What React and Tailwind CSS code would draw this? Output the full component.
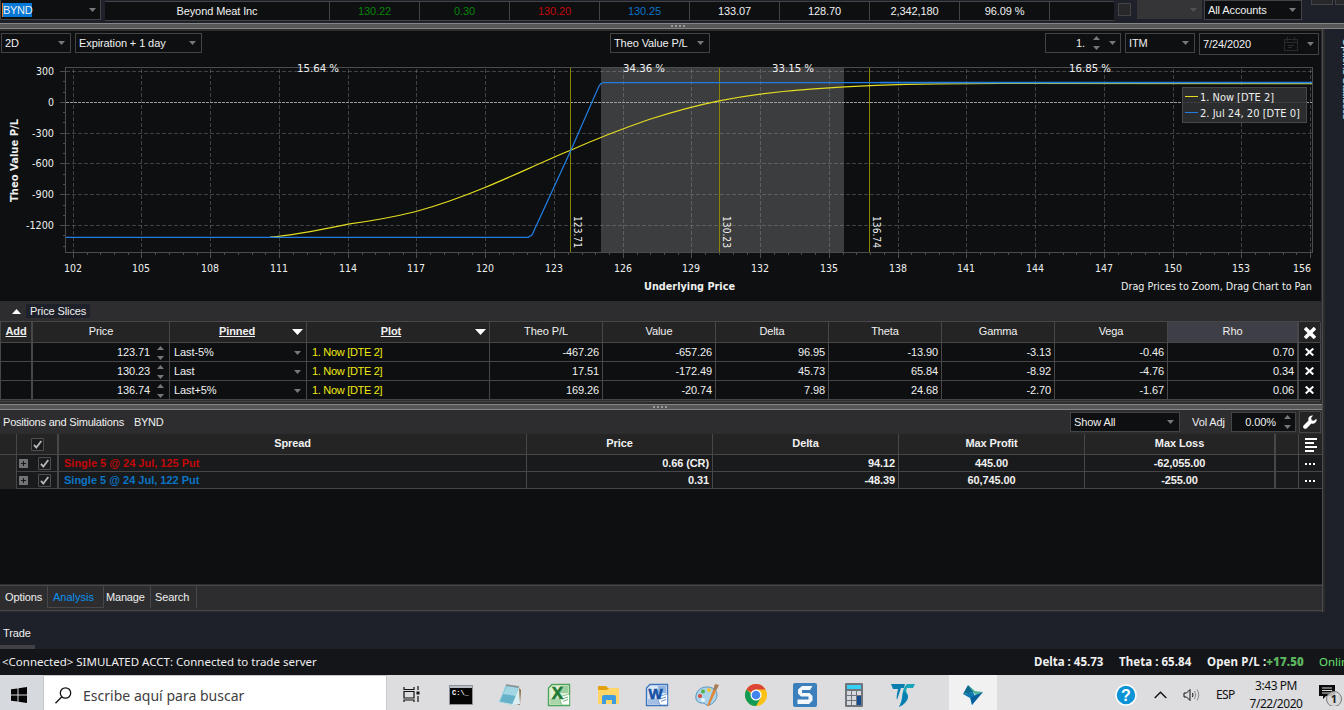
import React from "react";

const ARIAL = "font-['Liberation_Sans',sans-serif]";
const UI = "font-['Noto_Sans',sans-serif]";

function Down({ className = "text-[#77787a]", w = 7, h = 4 }) {
  return (
    <svg className={"shrink-0 " + className} width={w} height={h} viewBox="0 0 8 4" preserveAspectRatio="none">
      <path d="M0 0H8L4 4Z" fill="currentColor" />
    </svg>
  );
}

function Up({ className = "text-[#77787a]", w = 7, h = 4 }) {
  return (
    <svg className={"shrink-0 " + className} width={w} height={h} viewBox="0 0 8 4" preserveAspectRatio="none">
      <path d="M0 4H8L4 0Z" fill="currentColor" />
    </svg>
  );
}

function Combo({ className, children }) {
  return (
    <div className={"flex shrink-0 items-center justify-between border border-[#434446] bg-[#0d0f11] pl-[3px] pr-[5px] " + className}>
      <span>{children}</span>
      <Down />
    </div>
  );
}

function Splitter({ className, dots }) {
  return (
    <div className={"flex shrink-0 justify-start border-y border-[#858585] bg-[#575757] " + className}>
      <div className={"flex h-[2px] gap-[2px] " + dots}>
        <i className="w-[2px] bg-[#9a9a9a]" />
        <i className="w-[2px] bg-[#9a9a9a]" />
        <i className="w-[2px] bg-[#9a9a9a]" />
        <i className="w-[2px] bg-[#9a9a9a]" />
      </div>
    </div>
  );
}

const quotes = [
  ["130.22", "text-[#078307]"],
  ["0.30", "text-[#078307]"],
  ["130.20", "text-[#c00808]"],
  ["130.25", "text-[#0a74c4]"],
  ["133.07", ""],
  ["128.70", ""],
  ["2,342,180", ""],
  ["96.09 %", ""],
];

function QuoteBar() {
  return (
    <header className="flex h-[23px] shrink-0 items-start bg-[#1e202a]">
      <div className="flex h-5 w-[101px] items-center justify-between border border-t-0 border-[#434446] bg-[#0d0f11] pl-[1px] pr-1">
        <span className="h-[14px] w-[30px] border-l border-[#f08030] bg-[#0478d7] leading-[14px] tracking-[-0.3px]">BYND</span>
        <Down />
      </div>
      <div className="ml-1 mt-px flex h-5 w-[1009px] border-y border-[#434446] bg-[#0d0f11] text-center leading-[19px]">
        <div className="w-[225px] border-r border-[#434446]">Beyond Meat Inc</div>
        {quotes.map(([t, c], i) => (
          <div key={i} className={"w-[90px] border-r border-[#434446] " + c}>{t}</div>
        ))}
      </div>
      <div className="ml-1 mt-[3px] size-[13px] border border-[#434446] bg-[#28282a]" />
      <div className="ml-[6px] flex h-[19px] w-[65px] items-center justify-end bg-[#353538] pr-[5px]">
        <Down className="text-[#505154]" />
      </div>
      <Combo className="ml-[2px] h-5 w-[98px]">All Accounts</Combo>
      <div className="ml-[9px] h-[5px] w-[22px] border border-t-0 border-[#434446] bg-[#28282a]" />
      <div className="ml-[2px] h-[5px] w-[9px] border border-r-0 border-t-0 border-[#434446] bg-[#28282a]" />
    </header>
  );
}

function Toolbar() {
  return (
    <div className="flex h-6 shrink-0 items-start pl-[1px] pt-[2px]">
      <Combo className="h-5 w-[70px]">2D</Combo>
      <Combo className="ml-1 h-5 w-[127px]">Expiration + 1 day</Combo>
      <Combo className="ml-[408px] h-5 w-[100px]">Theo Value P/L</Combo>
      <div className="ml-[335px] flex h-5 w-[76px] items-center justify-end border border-[#434446] pr-1">
        <span className="mr-2">1.</span>
        <span className="mr-[9px] flex flex-col gap-[6px]"><Up /><Down /></span>
        <Down />
      </div>
      <Combo className="ml-1 h-5 w-[70px]">ITM</Combo>
      <div className="ml-1 flex h-[22px] w-[120px] items-center border border-[#434446] pl-[3px] pr-1">
        <span className="flex-1">7/24/2020</span>
        <svg className="mr-[9px]" width="14" height="14" viewBox="0 0 14 14" fill="none" stroke="#2a2b2d">
          <path d="M.5 2.5h13v11H.5zM.5 5.5h13M3.5 0v4M10.5 0v4M4 8.5h6M4 10.5h4" />
        </svg>
        <Down />
      </div>
    </div>
  );
}

const xTicks = [73, 141, 210, 279, 348, 416, 485, 554, 623, 691, 760, 829, 898, 966, 1035, 1104, 1173, 1241, 1310];
const yTicks = [[71, "300"], [102, "0"], [133, "-300"], [163, "-600"], [194, "-900"], [225, "-1200"]];
const slices = [[570, "123.71", 574], [719, "130.23", 723], [869, "136.74", 873]];
const shares = [[297, "15.64 %"], [623, "34.36 %"], [772, "33.15 %"], [1069, "16.85 %"]];

function Chart() {
  const minorX = Array.from({ length: 91 }, (_, i) => Math.round(73 + i * 13.745)).filter((_, i) => i % 5 !== 0);
  const minorY = Array.from({ length: 18 }, (_, i) => Math.round(71 + i * 10.28)).filter((_, i) => i % 3 !== 0);
  return (
    <svg className="shrink-0 tracking-normal" width="1321" height="246" viewBox="0 55 1321 246" fontFamily="'DejaVu Sans Condensed','DejaVu Sans',sans-serif" fontStretch="condensed" fontSize="11" fill="#efefef">
      <rect x="601" y="68" width="243" height="184" fill="#3c3d3f" />
      <g stroke="#a0a0a0" strokeOpacity=".35" strokeDasharray="4 2" shapeRendering="crispEdges">
        {xTicks.map((x) => <path key={x} d={`M${x}.5 69V252`} />)}
        {yTicks.map(([y]) => y !== 102 && <path key={y} d={`M66 ${y}.5H1312`} />)}
      </g>
      <path d="M66 102.5H1312" stroke="#9c9c9c" strokeDasharray="3 1" shapeRendering="crispEdges" />
      <g stroke="#4b4c4e" fill="none" shapeRendering="crispEdges">
        <path d="M65.5 67.5H1312.5V252.5H65.5Z" />
        {xTicks.map((x) => <path key={x} d={`M${x}.5 253V258`} />)}
        {minorX.map((x) => <path key={x} d={`M${x}.5 253V255`} />)}
        {yTicks.map(([y]) => <path key={y} d={`M60 ${y}.5H65`} />)}
        {minorY.map((y) => <path key={y} d={`M63 ${y}.5H65`} />)}
      </g>
      <g stroke="#8a8400" shapeRendering="crispEdges">
        {slices.map(([x]) => <path key={x} d={`M${x}.5 68V252`} />)}
      </g>
      <path d="M270 237.2C296 235 322 229.500 348 224.200C371 221 394 217 416 211.500C440 205 463 196.500 485 187.500C514 175.500 542 162 570 150.500C597 138.500 623 128.500 649 119.500C672 112 696 105.500 719 100.800C744 96 780 91 814 88.800C855 86 896 84.400 938 83.900L1000 83.500H1312" stroke="#e3dc20" fill="none" strokeWidth="1.25" />
      <path d="M66 237.4H528L532 235L571 150L599 86L601 83.5L604 82.5H1312" stroke="#217de2" fill="none" strokeWidth="1.25" />
      <path d="M880 82.5H1312" stroke="#217de2" strokeWidth="1.4" />
      {shares.map(([x, t]) => <text key={x} x={x} y="72" textLength="42" lengthAdjust="spacingAndGlyphs">{t}</text>)}
      {yTicks.map(([y, t]) => <text key={y} x="54" y={y + 4} textAnchor="end" textLength={t.replace("-", "").length * 6 + (t[0] === "-" ? 4 : 0)} lengthAdjust="spacingAndGlyphs">{t}</text>)}
      {xTicks.map((x, i) => <text key={x} x={i === 18 ? 1302 : x} y="272" textAnchor="middle" textLength="18" lengthAdjust="spacingAndGlyphs">{102 + i * 3}</text>)}
      {slices.map(([x, t, tx]) => <text key={x} transform={`translate(${tx} 216) rotate(90)`} textLength="32" lengthAdjust="spacingAndGlyphs">{t}</text>)}
      <text x="644" y="290" fontWeight="bold" textLength="91" lengthAdjust="spacingAndGlyphs">Underlying Price</text>
      <text transform="translate(18 202) rotate(-90)" fontWeight="bold" textLength="83" lengthAdjust="spacingAndGlyphs">Theo Value P/L</text>
      <text x="1121" y="290" textLength="191" lengthAdjust="spacingAndGlyphs">Drag Prices to Zoom, Drag Chart to Pan</text>
      <rect x="1182.5" y="87.5" width="124" height="35" fill="#303133" fillOpacity=".85" stroke="#47484a" />
      <path d="M1185 96.5H1198" stroke="#e3dc20" />
      <path d="M1185 112.5H1198" stroke="#217de2" />
      <text x="1200" y="101" textLength="74" lengthAdjust="spacingAndGlyphs">1. Now [DTE 2]</text>
      <text x="1200" y="117" textLength="100" lengthAdjust="spacingAndGlyphs">2. Jul 24, 20 [DTE 0]</text>
    </svg>
  );
}

const sliceGrid = "grid grid-cols-[33px_137px_137px_183px_113px_113px_113px_113px_113px_113px_131px_22px]";
const sliceRows = [
  ["123.71", "Last-5%", ["-467.26", "-657.26", "96.95", "-13.90", "-3.13", "-0.46", "0.70"]],
  ["130.23", "Last", ["17.51", "-172.49", "45.73", "65.84", "-8.92", "-4.76", "0.34"]],
  ["136.74", "Last+5%", ["169.26", "-20.74", "7.98", "24.68", "-2.70", "-1.67", "0.06"]],
];
const greeks = ["Theo P/L", "Value", "Delta", "Theta", "Gamma", "Vega", "Rho"];

function PriceSlices() {
  return (
    <section className="flex h-[103px] shrink-0 flex-col bg-[#2d2d2f]">
      <div className="flex h-5 items-center pl-3">
        <Up className="text-white" w={9} h={5} />
        <span className="ml-[5px] h-[14px] bg-[#1e202a] px-1 leading-[14px]">Price Slices</span>
      </div>
      <div className="w-[1320px] border-b border-t border-[#47474a] pb-px">
        <div className={sliceGrid + " h-[21px] border-b border-[#47474a] bg-[#242425] text-center leading-[19px]"}>
          <div className="border-l border-r-2 border-[#47474a] font-bold underline">Add</div>
          <div className="border-r border-[#47474a]">Price</div>
          <div className="flex items-center border-r border-[#47474a] pl-3 pr-[3px] font-bold underline">
            <span className="flex-1 self-start">Pinned</span><Down className="text-white" w={11} h={6} />
          </div>
          <div className="flex items-center border-r border-[#47474a] pr-[3px] font-bold underline">
            <span className="flex-1 self-start">Plot</span><Down className="text-white" w={11} h={6} />
          </div>
          {greeks.map((g) => (
            <div key={g} className={g === "Rho" ? "border-r-2 border-[#47474a] bg-[#3e3e46]" : "border-r border-[#47474a]"}>{g}</div>
          ))}
          <div className="flex items-center justify-center border-r border-[#47474a] pt-[2px]">
            <svg width="12" height="12" viewBox="0 0 12 12" stroke="#fff" strokeWidth="3.6"><path d="M1 1L11 11M11 1L1 11" /></svg>
          </div>
        </div>
        {sliceRows.map(([price, pin, vals]) => (
          <div key={price} className={sliceGrid + " h-[19px] border-b border-[#47474a] bg-[#0d0f11] text-right leading-[19px]"}>
            <div className="border-l border-r-2 border-[#47474a]" />
            <div className="flex items-center justify-end border-r border-[#47474a] pr-[5px]">
              <span className="mr-[7px]">{price}</span>
              <span className="flex flex-col gap-[6px]"><Up /><Down /></span>
            </div>
            <div className="flex items-center justify-between border-r border-[#47474a] pl-1 pr-[5px]">
              <span>{pin}</span><Down />
            </div>
            <div className="border-r border-[#47474a] pl-[5px] text-left tracking-[-0.3px] text-[#f0e911]">1. Now [DTE 2]</div>
            {vals.map((v, i) => (
              <div key={i} className={i === 6 ? "border-r-2 border-[#47474a] pr-[3px]" : "border-r border-[#47474a] pr-[3px]"}>{v}</div>
            ))}
            <div className="flex items-center justify-center border-r border-[#47474a] pb-px">
              <svg width="9" height="8" viewBox="0 0 9 8" stroke="#fff" strokeWidth="2"><path d="M.7 .5L8.3 7.5M8.3 .5L.7 7.5" /></svg>
            </div>
          </div>
        ))}
      </div>
    </section>
  );
}

function Check() {
  return (
    <svg width="13" height="13" viewBox="0 0 13 13" fill="#1a1b1d" stroke="#4f4f52">
      <path d="M.5 .5h12v12H.5z" />
      <path d="M3 6.8L5.3 9.5L10.3 3" fill="none" stroke="#b9b9b9" strokeWidth="1.8" />
    </svg>
  );
}

const posGrid = "grid grid-cols-[17px_42px_468px_186px_186px_186px_191px_23px_24px]";
const positions = [
  ["Single 5 @ 24 Jul, 125 Put", "text-[#c00808]", "0.66 (CR)", "94.12", "445.00", "-62,055.00"],
  ["Single 5 @ 24 Jul, 122 Put", "text-[#0a74c4]", "0.31", "-48.39", "60,745.00", "-255.00"],
];

function Positions() {
  return (
    <section className="flex h-[174px] shrink-0 flex-col">
      <div className="flex h-6 shrink-0 items-start bg-[#2d2d2f] pl-[3px] pt-[2px] leading-5">
        <span className="w-[131px] whitespace-nowrap tracking-[-0.2px]">Positions and Simulations</span>
        <span className="tracking-[-0.3px]">BYND</span>
        <Combo className="ml-auto h-5 w-[110px]">Show All</Combo>
        <span className="ml-3 w-[38px] whitespace-nowrap">Vol Adj</span>
        <div className="ml-[1px] flex h-5 w-[65px] items-center justify-end border border-[#434446] bg-[#0d0f11] pr-1">
          <span className="mr-[8px]">0.00%</span>
          <span className="flex flex-col gap-[6px]"><Up /><Down /></span>
        </div>
        <div className="-mt-px ml-[3px] mr-px flex h-[22px] w-[22px] items-center justify-center border border-[#434446] bg-[#242425]">
          <svg width="14" height="14" viewBox="0 0 24 24" fill="#fff"><path d="M23 6.500L18.600 9.800L14.800 8.800L13.900 5.200L17.200.9C13.800.1 10.400 2 9.400 5.200C9 6.700 9 8 9.500 9.400L1.300 17.400C-.2 19-.2 21.200 1.200 22.700C2.700 24.200 5 24.100 6.500 22.600L14.400 14.500C19.600 16.200 24.700 12 23 6.500Z" /></svg>
        </div>
      </div>
      <div className={posGrid + " h-[21px] shrink-0 border-b border-[#47474a] bg-[#242425] text-center font-bold leading-[19px]"}>
        <div className="border-r border-[#47474a]" />
        <div className="flex items-center justify-center border-r-2 border-[#47474a]"><Check /></div>
        {["Spread", "Price", "Delta", "Max Profit"].map((h) => <div key={h} className="border-r border-[#47474a]">{h}</div>)}
        <div className="border-r-2 border-[#47474a]">Max Loss</div>
        <div className="border-r border-[#47474a]" />
        <div className="flex items-center justify-center pt-px">
          <svg width="12" height="14" viewBox="0 0 12 14" stroke="#fff" strokeWidth="2"><path d="M0 1H12M0 5H9M0 9H12M0 13H9" /></svg>
        </div>
      </div>
      {positions.map(([name, color, price, delta, profit, loss]) => (
        <div key={name} className={posGrid + " h-[17px] shrink-0 border-b border-[#47474a] bg-[#191a1c] font-bold leading-[17px]"}>
          <div className="border-r border-[#47474a] bg-[#242425]" />
          <div className="flex items-center border-r-2 border-[#47474a] pl-[2px]">
            <svg className="-mt-px mr-[10px]" width="9" height="9" viewBox="0 0 9 9"><path d="M0 0h9v9H0z" fill="#737375" /><path d="M2 4.500h5M4.500 2v5" stroke="#151618" /></svg>
            <span className="-mt-px"><Check /></span>
          </div>
          <div className={"border-r border-[#47474a] pl-[5px] tracking-normal " + color}>{name}</div>
          <div className="border-r border-[#47474a] pr-[3px] text-right">{price}</div>
          <div className="border-r border-[#47474a] pr-[3px] text-right">{delta}</div>
          <div className="border-r border-[#47474a] text-center">{profit}</div>
          <div className="border-r-2 border-[#47474a] text-center">{loss}</div>
          <div className="border-r border-[#47474a]" />
          <div className="flex items-center justify-center gap-[2px] pr-[2px]">
            <i className="size-[2px] bg-white" /><i className="size-[2px] bg-white" /><i className="size-[2px] bg-white" />
          </div>
        </div>
      ))}
      <div className="flex-1 bg-[#0d0f11]" />
    </section>
  );
}

function Tabs() {
  return (
    <nav className="flex h-[28px] shrink-0 flex-col bg-[#2d2d2f] pt-px">
      <div className="flex h-[26px] items-start border-y border-[#47474a] leading-[22px]">
        <div className="h-[22px] w-[48px] border-r border-[#47474a] pl-[5px]">Options</div>
        <div className="h-[22px] w-[56px] border-b border-r border-[#47474a] pl-[5px] tracking-normal text-[#0a92ee]">Analysis</div>
        <div className="h-[22px] w-[47px] border-r border-[#47474a] pl-[2px] tracking-[-0.2px]">Manage</div>
        <div className="h-[22px] w-[46px] border-r border-[#47474a] pl-1">Search</div>
      </div>
    </nav>
  );
}

const sized = (children, w = 24, h = 24) => (
  <svg width={w} height={h} viewBox={`0 0 ${w} ${h}`}>{children}</svg>
);

function OfficeIcon({ dark, mid, light, letter }) {
  return sized(
    <>
      <path d="M5 1.500H22.500V22.500H1.500V5Z" fill={light} stroke={mid} strokeWidth="1.4" />
      <path d="M13 3H21V10H13Z" fill={mid} fillOpacity=".45" />
      <path d="M3 16L14 15V21H3Z" fill={mid} fillOpacity=".35" />
      <path d="M12 14L22.500 11V22H15Z" fill="#fff" stroke={mid} strokeWidth=".6" />
      <path d="M15 16L21 14M16 18.500L21 16.500" stroke={mid} strokeWidth=".8" />
      <text x="10.500" y="16" textAnchor="middle" fontFamily="Liberation Sans" fontWeight="bold" fontSize={letter === "W" ? 15 : 17} fill={dark} stroke={dark} strokeWidth=".6">{letter}</text>
    </>
  );
}

const apps = [
  sized(<><path d="M.5 1.500h23v19H.5z" fill="#050505" stroke="#8c9298" /><path d="M1 2h22v2H1z" fill="#b9bec4" /><text x="3" y="11" fontFamily="Liberation Mono" fontWeight="bold" fontSize="7" fill="#fff">C:\_</text></>, 24, 22),
  sized(<><path d="M19 3L23 7L22 22L17 21Z" fill="#8a6b43" /><path d="M8 2L21 4L17 22L1 19Z" fill="#66b3c9" stroke="#b9dce4" /><path d="M9 3L20 5L18 13L5 11Z" fill="#a2d6e2" /><path d="M21 5L22 21L14 22Z" fill="#dbeef2" /><path d="M8 2L21 4" stroke="#8c8c8c" strokeWidth="1.6" /></>),
  <OfficeIcon dark="#1f7a35" mid="#4fa45a" light="#dff0d8" letter="X" />,
  sized(<><path d="M1 3H9L11 5H22V20H1Z" fill="#e3a010" /><path d="M1 7H10L12 5H22V21H1Z" fill="#ffd667" /><path d="M5 14Q5 12 7 12H17Q19 12 19 14V21H15V17H9V21H5Z" fill="#3f9be0" /></>, 23, 24),
  <OfficeIcon dark="#1650a4" mid="#3f74bd" light="#dbe8f8" letter="W" />,
  sized(<><path d="M12 4C3 4 0 11 1 16C3 22 10 19 10 21C13 25 22 19 22 12C22 7 18 4 12 4Z" fill="#a9d4ea" stroke="#5b98bf" /><circle cx="5" cy="13" r="2" fill="#e0483a" /><circle cx="8" cy="8.500" r="2" fill="#55b04b" /><circle cx="14" cy="7" r="2" fill="#f4c531" /><circle cx="8" cy="17" r="2" fill="#e8f4fa" /><path d="M12 23L18 7L21 8L14 23Z" fill="#e0873a" /><path d="M18 7L20 1L24 2L21 8Z" fill="#a87d55" /></>),
  sized(<><circle cx="12" cy="12" r="11" fill="#fbc116" /><path d="M12 12L2.470 6.500A11 11 0 0 1 21.530 6.500H12Z" fill="#dc4437" /><path d="M2.470 6.500A11 11 0 0 0 12 23L16.760 14.750H12Z" fill="#149a57" /><circle cx="12" cy="12" r="5.500" fill="#fff" /><circle cx="12" cy="12" r="4.300" fill="#4384ee" /></>),
  sized(<><rect width="24" height="24" rx="2" fill="#3b80bd" /><path d="M19.500 3H9L5 6.500V10.500L8 13.500H15.500V16.500H4.500V21H16L19.500 17.500V13L16.500 10H9V7H17Z" fill="#f4f8fb" /></>),
  sized(<><rect width="18" height="24" rx="1" fill="#70757c" /><path d="M2 2h14v4H2z" fill="#35d0f4" /><path d="M2 8h4v4H2zM7 8h4v4H7zM12 8h4v4h-4zM2 13h4v4H2zM7 13h4v4H7zM2 18h4v4H2zM7 18h4v4H7z" fill="#d6d9dd" /><path d="M12 13h4v9h-4z" fill="#134a91" /></>, 18, 24),
  sized(<><path d="M0 1H14L13 5H10L6 17Q5 14 7 6H2Z" fill="#087fae" /><path d="M16 1H24L22 5H16Q14 8 17 12Q18 18 8 24Q11 18 11 14Q12 4 16 1Z" fill="#1ba5ba" /><path d="M12 10Q11 19 8 24Q17 20 17 13L13 8Z" fill="#087fb3" /></>),
];

function Taskbar() {
  return (
    <footer className={"flex h-[35px] shrink-0 bg-[#dddddf] tracking-normal text-[#111] " + UI}>
      <div className="flex w-[43px] items-center justify-start bg-[#d6d9de] pl-[11px] pt-1">
        <svg width="16" height="16" viewBox="0 0 16 16"><path d="M0 2.300L6.500 1.400V7.500H0zM7.500 1.200L16 0V7.500H7.500zM0 8.500H6.500V14.600L0 13.700zM7.500 8.500H16V16L7.500 14.800z" fill="#050505" /></svg>
      </div>
      <div className="flex w-[344px] items-center border-x border-t border-[#c8c8c8] bg-white pl-[11px] pt-[5px]">
        <svg width="17" height="17" viewBox="0 0 17 17" fill="none" stroke="#111" strokeWidth="1.3"><circle cx="10.500" cy="6" r="5.200" /><path d="M6.800 9.800L.5 16.200" /></svg>
        <span className="ml-[11px] whitespace-nowrap text-[14px] leading-5 tracking-[0.02px] text-[#404040]">Escribe aquí para buscar</span>
      </div>
      <div className="flex w-[49px] items-center justify-center pt-1">
        <svg width="17" height="17" viewBox="0 0 17 17" fill="none" stroke="#111" strokeWidth="1.2"><path d="M1 1V3.500H11V1M1 5.500H11V12H1ZM1 16V14H11V16M15 0V4M15 10V16" /><path d="M13.500 5.500h3v3h-3z" fill="#111" stroke="none" /></svg>
      </div>
      {apps.map((icon, i) => <div key={i} className="flex w-[49.2px] items-center justify-center pt-1">{icon}</div>)}
      <div className="ml-[21px] flex w-12 items-center justify-center bg-[#f1f1f2] pt-1">
        <svg width="20" height="20" viewBox="0 0 20 20"><path d="M5 0L12 7L0 9Z" fill="#0c6b8e" /><path d="M5 0L12 6L20 7L14 12Z" fill="#55b59c" /><path d="M0 9L10 7L13 13L9 20L7 13Z" fill="#0c78b0" /><path d="M20 7L9 20L8 12Z" fill="#075f9e" /></svg>
      </div>
      <div className="ml-auto flex w-[229px] items-center pt-[5px]">
        <svg width="22" height="22" viewBox="0 0 22 22"><circle cx="11" cy="11" r="10" fill="#0b93d5" stroke="#fff" strokeWidth="1.500" /><text x="11" y="16.500" textAnchor="middle" fontFamily="Liberation Sans" fontWeight="bold" fontSize="16" fill="#fff">?</text></svg>
        <svg className="ml-[17px]" width="13" height="8" viewBox="0 0 13 8" fill="none" stroke="#111" strokeWidth="1.400"><path d="M.7 7L6.500 1.200L12.300 7" /></svg>
        <svg className="ml-[16px]" width="18" height="14" viewBox="0 0 18 14" fill="none" stroke="#111"><path d="M1 5H3.500L7 1.500V12.500L3.500 9H1Z" /><path d="M9.500 5Q10.500 7 9.500 9" /><path d="M11.500 3Q14 7 11.500 11M14 1.500Q17.500 7 14 12.500" stroke="#8a8a8a" /></svg>
        <span className="ml-[15px] w-[21px] text-[12px] tracking-[-0.6px]">ESP</span>
        <div className="-mt-[1px] ml-[12px] w-[54px] whitespace-nowrap text-center text-[12px] leading-[18px] tracking-[-0.45px]">
          <div>3:43 PM</div>
          <div className="-ml-[2px] w-[58px]">7/22/2020</div>
        </div>
        <svg className="ml-4 shrink-0" width="24" height="22" viewBox="0 0 24 22"><path d="M0 1H16V12H7L4 15V12H0Z" fill="#0b0b0b" /><path d="M3 4H13M3 6.500H13M3 9H11" stroke="#ddd" /><circle cx="15" cy="15" r="7.500" fill="#d7d7d7" fillOpacity=".85" stroke="#777" /><text x="15" y="19" textAnchor="middle" fontFamily="Noto Sans" fontSize="11" fontWeight="bold" fill="#222">1</text></svg>
      </div>
    </footer>
  );
}

export default function App() {
  return (
    <div className={"flex h-[710px] w-[1344px] flex-col overflow-hidden bg-[#1e202a] text-[11px] leading-[14px] tracking-[-0.1px] text-[#f0f0f0] " + ARIAL}>
      <QuoteBar />
      <Splitter className="h-[6px]" dots="ml-[671px] mt-[1px]" />
      <div className="flex h-[583px] shrink-0">
        <main className="flex w-[1325px] shrink-0 flex-col border-r border-[#2b2b2c] bg-[#2d2d2f]">
          <div className="flex w-[1323px] flex-1 flex-col border-r border-[#4b4b4d]">
            <div className="flex h-[272px] w-[1321px] shrink-0 flex-col border-t-2 border-[#2d2d2f] bg-[#0d0f11]">
              <Toolbar />
              <Chart />
            </div>
            <PriceSlices />
            <Splitter className="h-[6px]" dots="ml-[653px] mt-[1px]" />
            <Positions />
            <Tabs />
          </div>
        </main>
        <aside className="flex-1 overflow-hidden pl-[16px] pt-[9px]">
          <span className="block whitespace-nowrap leading-[12px] tracking-[-0.2px] text-[#d5e7f2] [writing-mode:vertical-rl]">Options Statistics</span>
        </aside>
      </div>
      <div className="flex h-[37px] shrink-0 flex-col justify-end">
        <div className="w-[35px] border-b-4 border-[#404045] pb-[5px] pl-[3px]">Trade</div>
      </div>
      <div className={"flex h-[26px] shrink-0 items-center overflow-hidden whitespace-nowrap bg-[#141519] text-[11.5px] tracking-normal " + UI}>
        <span className="ml-[2px]">&lt;Connected&gt; SIMULATED ACCT: Connected to trade server</span>
        <div className="ml-auto flex w-[310px] shrink-0 font-bold">
          <span className="w-[85px] shrink-0">Delta : 45.73</span>
          <span className="w-[88px] shrink-0 tracking-[0.05px]">Theta : 65.84</span>
          <span className="w-[112px] shrink-0 tracking-[0.1px]">Open P/L :<b className="text-[#5cb35f]">+17.50</b></span>
          <span className="shrink-0 font-normal text-[#67e070]">Online</span>
        </div>
      </div>
      <Taskbar />
    </div>
  );
}
